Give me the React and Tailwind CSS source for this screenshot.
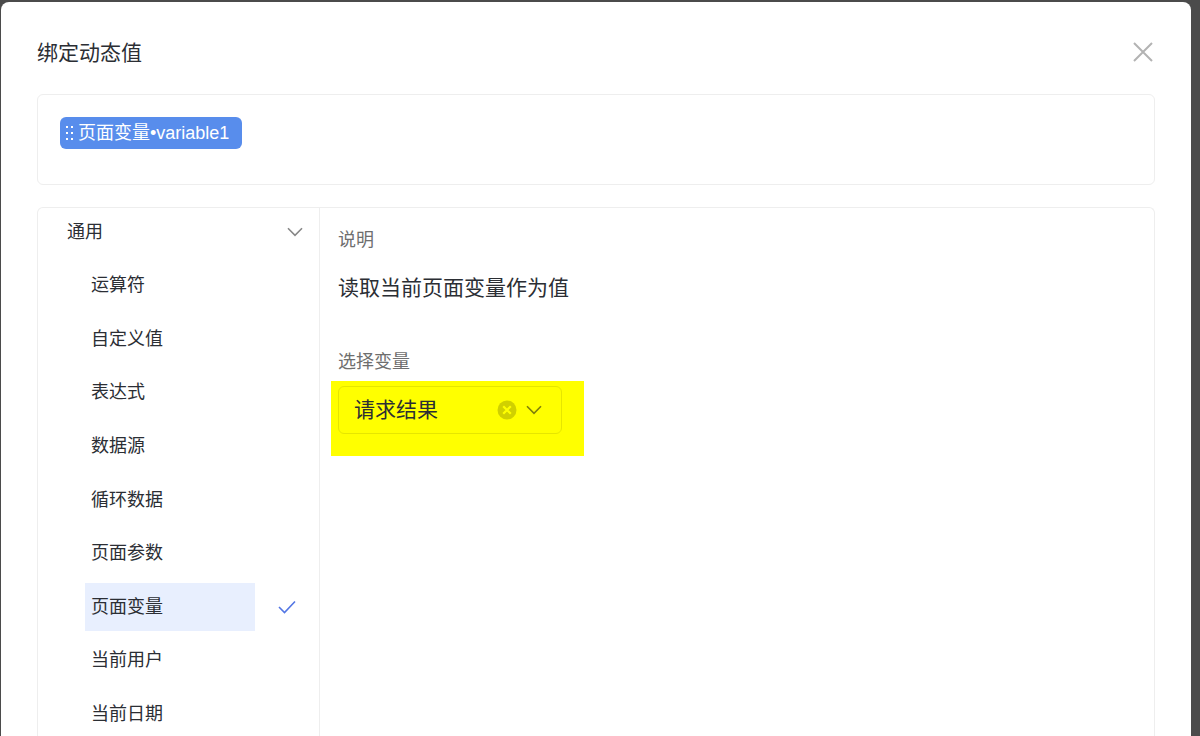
import { useState } from "react";

const items = ["运算符", "自定义值", "表达式", "数据源", "循环数据", "页面参数", "页面变量", "当前用户", "当前日期"];

function Chevron({ className }) {
  return (
    <svg viewBox="0 0 16 10" className={className} fill="none" stroke="currentColor" strokeWidth="1.6" aria-hidden="true">
      <path d="M1 1.2 8 8.4l7-7.2" />
    </svg>
  );
}

function DragDots() {
  return (
    <svg viewBox="0 0 8 14" className="h-[14px] w-2 shrink-0" fill="currentColor" aria-hidden="true">
      <path d="M0 0h2v2H0zM5 0h2v2H5zM0 6h2v2H0zM5 6h2v2H5zM0 12h2v2H0zM5 12h2v2H5z" />
    </svg>
  );
}

export default function App() {
  const [active, setActive] = useState("页面变量");
  const [variable, setVariable] = useState("请求结果");

  return (
    <div className="flex h-screen overflow-hidden bg-[#4b4b4b] pt-[2px] pr-[9px] pl-px font-['Liberation_Sans','Noto_Sans_CJK_SC',sans-serif] text-lg text-[#2b2e34]">
      <section role="dialog" aria-labelledby="title" className="flex min-w-0 flex-1 flex-col rounded-t-lg bg-white pr-9 pl-9">
        <header className="flex h-[92px] shrink-0 items-center justify-between">
          <h1 id="title" className="pt-[10px] text-[21px] leading-8">绑定动态值</h1>
          <button type="button" aria-label="关闭" className="pt-2 text-[#b3b3b3]">
            <svg viewBox="0 0 24 24" className="size-6" fill="none" stroke="currentColor" strokeWidth="2" aria-hidden="true">
              <path d="M3 3l18 18M21 3 3 21" />
            </svg>
          </button>
        </header>

        <div className="h-[91px] shrink-0 rounded-md border border-[#eeeeee] px-[22px] py-[22px]">
          <span className="inline-flex h-8 items-center gap-1 rounded-md bg-[#588dec] pr-[13px] pl-[6px] leading-8 text-white">
            <DragDots />
            页面变量•variable1
          </span>
        </div>

        <div className="mt-[22px] flex min-h-0 flex-1 overflow-hidden rounded-t-md border border-b-0 border-[#eeeeee]">
          <nav className="w-[282px] shrink-0 border-r border-[#eeeeee]">
            <button type="button" aria-expanded="true" className="flex h-12 w-full items-center justify-between pr-4 pl-[29px] text-left">
              通用
              <Chevron className="h-[10px] w-4 text-[#888888]" />
            </button>
            <ul className="mt-[5px] flex h-[477px] flex-col justify-between pr-[23px] pl-[47px]">
              {items.map((item) => (
                <li key={item} className="flex items-center justify-between">
                  <button
                    type="button"
                    onClick={() => setActive(item)}
                    className={item === active ? "h-12 w-[170px] bg-[#e8effe] pl-[6px] text-left" : "h-12 w-[170px] pl-[6px] text-left"}
                  >
                    {item}
                  </button>
                  {item === active && (
                    <svg viewBox="0 0 18 14" className="h-[14px] w-[18px] text-[#5376e4]" fill="none" stroke="currentColor" strokeWidth="1.6" aria-hidden="true">
                      <path d="M1 7l5.5 5.5L17 1.5" />
                    </svg>
                  )}
                </li>
              ))}
            </ul>
          </nav>

          <main className="min-w-0 flex-1 pt-[18px] pl-[11px]">
            <h2 className="pl-[7px] leading-7 text-[#6e6e6e]">说明</h2>
            <p className="mt-[18px] pl-[7px] text-[21px] leading-8">读取当前页面变量作为值</p>
            <label htmlFor="variable" className="mt-11 block pl-[7px] leading-7 text-[#6e6e6e]">选择变量</label>
            <div className="mt-[5px] h-[75px] w-[253px] bg-[#ffff00] pt-[5px] pl-[7px]">
              <div className="relative h-12 w-[224px]">
                <select
                  id="variable"
                  value={variable}
                  onChange={(e) => setVariable(e.target.value)}
                  className="h-full w-full appearance-none rounded-md border border-[#e6e600] bg-transparent px-[15px] pt-px text-[21px]"
                >
                  <option value=""></option>
                  <option value="请求结果">请求结果</option>
                </select>
                <div className="pointer-events-none absolute inset-y-0 right-5 flex items-center gap-[9px]">
                  <button type="button" aria-label="清除" onClick={() => setVariable("")} className="pointer-events-auto">
                    <svg viewBox="0 0 20 20" className="size-5" aria-hidden="true">
                      <circle cx="10" cy="10" r="9.5" fill="#d0d000" />
                      <path d="M6.2 6.2l7.6 7.6M13.8 6.2l-7.6 7.6" stroke="#ffff00" strokeWidth="2.2" />
                    </svg>
                  </button>
                  <Chevron className="h-[10px] w-4 text-[#7f7f0a]" />
                </div>
              </div>
            </div>
          </main>
        </div>
      </section>
    </div>
  );
}
